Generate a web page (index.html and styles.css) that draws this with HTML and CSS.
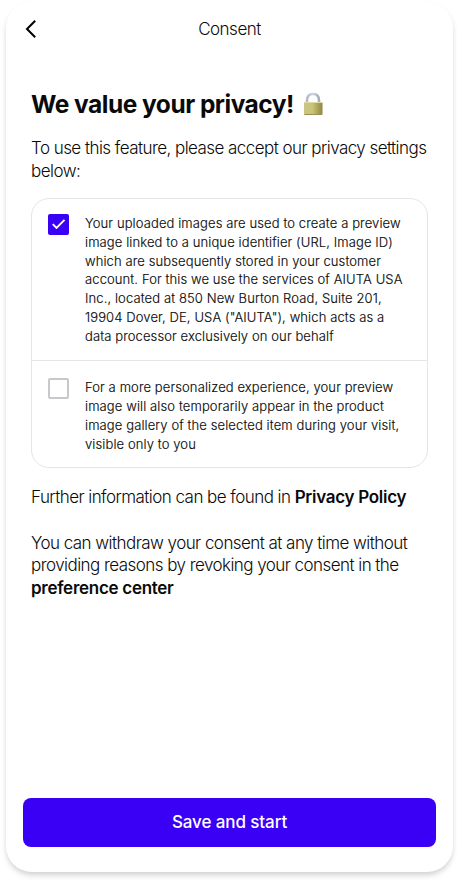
FILE: index.html
```html
<!DOCTYPE html>
<html lang="en">
<head>
<meta charset="utf-8">
<meta name="viewport" content="width=device-width, initial-scale=1">
<title>Consent</title>
<link rel="stylesheet" href="styles.css">
</head>
<body>
<main class="screen">
  <header class="topbar">
    <button class="back" aria-label="Back">
      <svg width="12" height="20" viewBox="0 0 12 20"><path d="M10.2 1.8 2 10l8.2 8.2" fill="none" stroke="#000" stroke-width="2"/></svg>
    </button>
    <span class="title">Consent</span>
  </header>
  <div class="content">
    <h1 class="heading"><span>We value your privacy!</span>
      <svg class="lock" width="20" height="24" viewBox="0 0 20 24">
        <defs>
          <linearGradient id="brass" x1="0" y1="0" x2="1" y2="0"><stop offset="0" stop-color="#c9c585"/><stop offset=".45" stop-color="#cbc476"/><stop offset="1" stop-color="#8f8642"/></linearGradient>
          <linearGradient id="steel" x1="0" y1="0" x2="1" y2="0"><stop offset="0" stop-color="#b3b8c8"/><stop offset=".5" stop-color="#cbd5ea"/><stop offset="1" stop-color="#a3abbd"/></linearGradient>
        </defs>
        <path d="M4 12V8.500C4 4 6.300 2 10 2s6 2 6 6.500V12" fill="none" stroke="url(#steel)" stroke-width="2.600"/>
        <rect x="1" y="10" width="18.500" height="13" rx="1" fill="url(#brass)"/>
        <path d="M1.500 10.500h17.500" stroke="#dedaa5"/>
        <path d="M1.500 22.500h17.500" stroke="#989153"/>
      </svg>
    </h1>
    <p class="text intro">To use this feature, please accept our privacy settings<br>below:</p>
    <section class="options">
      <label class="option">
        <span class="box checked"><svg width="21" height="21" viewBox="0 0 21 21"><path d="m4.800 10.200 3.700 3.700 8-8" fill="none" stroke="#fff" stroke-width="1.900"/></svg></span>
        <span class="label">Your uploaded images are used to create a preview<br>image linked to a unique identifier (URL, Image ID)<br>which are subsequently stored in your customer<br>account. For this we use the services of AIUTA USA<br>Inc., located at 850 New Burton Road, Suite 201,<br>19904 Dover, DE, USA ("AIUTA"), which acts as a<br>data processor exclusively on our behalf</span>
      </label>
      <label class="option">
        <span class="box"></span>
        <span class="label">For a more personalized experience, your preview<br>image will also temporarily appear in the product<br>image gallery of the selected item during your visit,<br>visible only to you</span>
      </label>
    </section>
    <p class="text policy">Further information can be found in <b>Privacy Policy</b></p>
    <p class="text">You can withdraw your consent at any time without<br>providing reasons by revoking your consent in the<br><b>preference center</b></p>
  </div>
  <button class="save">Save and start</button>
</main>
</body>
</html>
```
FILE: styles.css
```css
* { box-sizing: border-box; }
html, body { margin: 0; height: 100%; background: #fff; }
body {
  padding: 2px 6px 10px 6px;
  overflow: hidden;
  font-family: Inter, "Liberation Sans", sans-serif;
  color: #0a0a0a;
}
button { border: 0; padding: 0; background: none; font: inherit; }
.screen {
  display: flex;
  flex-direction: column;
  height: 870px;
  padding: 0 17px 25px;
  border-radius: 26px;
  background: #fff;
  box-shadow: 0 4px 6px -1px rgba(0, 0, 0, .17), 0 2px 5px rgba(0, 0, 0, .03);
}
.topbar {
  display: grid;
  grid-template-columns: 30px 1fr 30px;
  align-items: center;
  height: 54px;
  margin-bottom: 32px;
}
.back { display: flex; padding-left: 2px; }
.title {
  text-align: center;
  font-size: 17px;
  font-weight: 350;
  letter-spacing: -.5px;
}
.content { flex: 1; padding: 0 8px; white-space: nowrap; }
.heading {
  display: flex;
  align-items: center;
  gap: 9px;
  height: 31px;
  margin: 0 0 18px;
  font-size: 24.5px;
  font-weight: 670;
  letter-spacing: -.5px;
}
.heading .lock { position: relative; top: .5px; }
.text {
  margin: 0;
  font-size: 17px;
  font-weight: 350;
  line-height: 22.8px;
  letter-spacing: -.55px;
}
.text b { font-weight: 600; letter-spacing: -.28px; }
.options {
  margin: 15px 0 18px;
  border: 1px solid #e5e5ea;
  border-radius: 18px;
}
.option {
  display: flex;
  gap: 16px;
  padding: 15px 16px 15px;
}
.option + .option { border-top: 1px solid #e5e5ea; padding-top: 17px; padding-bottom: 14px; }
.box {
  flex: none;
  width: 21px;
  height: 21px;
  border: 2px solid #c7c7cc;
  border-radius: 2px;
}
.box.checked { display: flex; border: 0; background: #3a00f5; }
.option:first-child .box { margin-top: .5px; }
.label {
  font-size: 13px;
  font-weight: 350;
  line-height: 18.75px;
  letter-spacing: .11px;
  -webkit-text-stroke: .15px #0a0a0a;
}
.option:first-child .label { margin-top: .5px; }
.policy { margin-bottom: 22.4px; }
.save {
  height: 49.5px;
  border-radius: 8px;
  background: #3a00f5;
  color: #fff;
  font-size: 17px;
  font-weight: 550;
  letter-spacing: -.1px;
}
```
